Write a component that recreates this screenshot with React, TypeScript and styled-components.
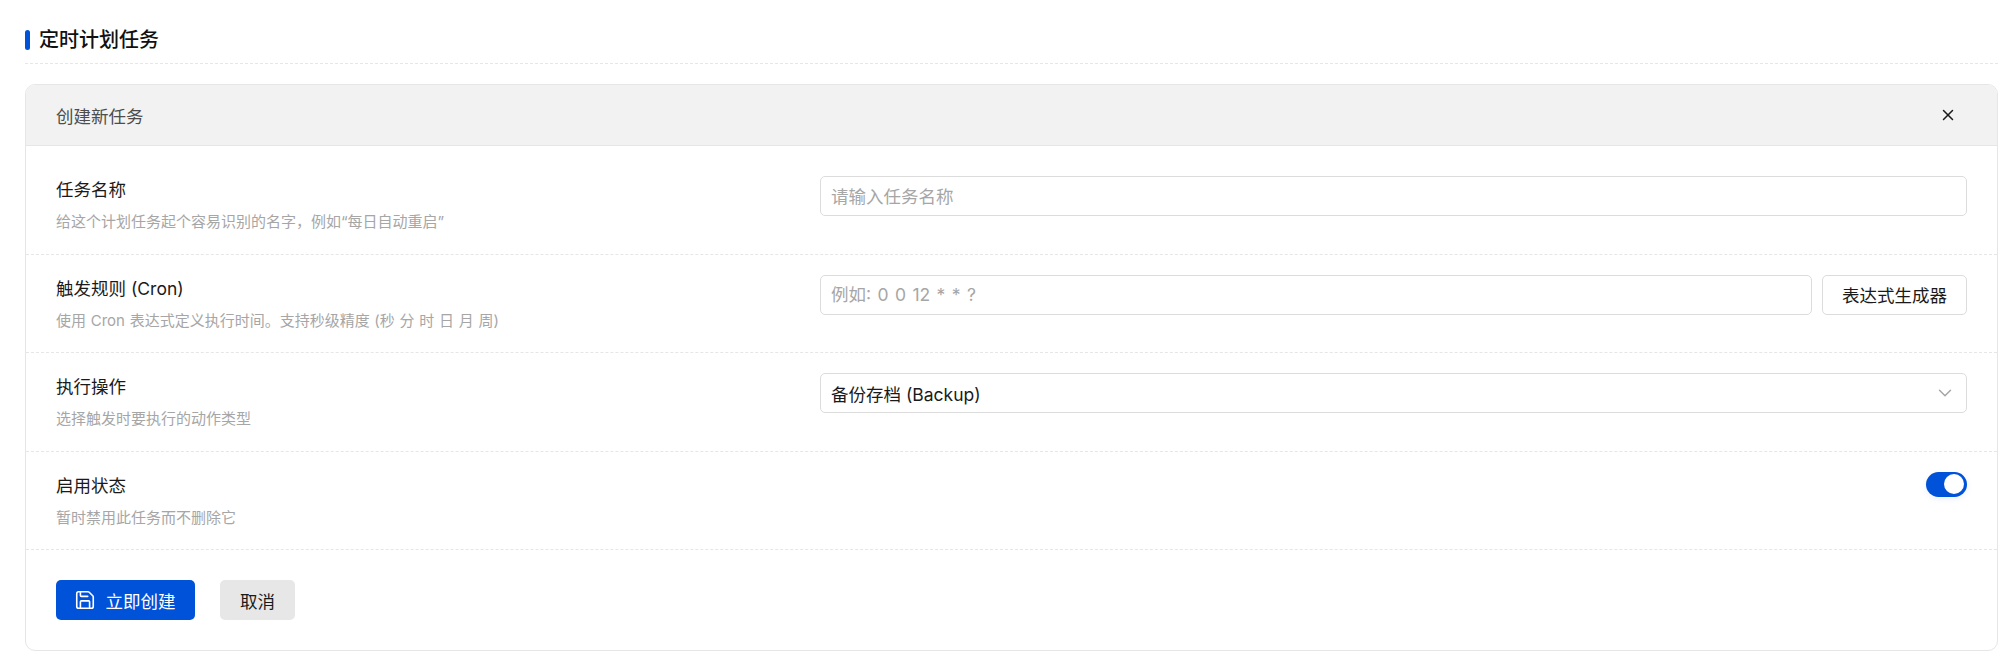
import React from "react";
import styled, { createGlobalStyle } from "styled-components";
import { Save, X, ChevronDown } from "lucide-react";

const FONT = `Inter, "Noto Sans CJK SC", sans-serif`;

const GlobalStyle = createGlobalStyle`
  html, body {
    margin: 0;
    padding: 0;
    background: #fff;
    font-family: ${FONT};
    overflow: hidden;
  }
  * {
    box-sizing: border-box;
  }
`;

const App: React.FC = () => {
  return (
    <>
      <GlobalStyle />
      <Page>
        <PageHeader>
          <PageTitle>定时计划任务</PageTitle>
        </PageHeader>

        <Panel>
          <PanelHeader>
            <PanelTitle>创建新任务</PanelTitle>
            <CloseButton>
              <X size={18} strokeWidth={2} />
            </CloseButton>
          </PanelHeader>

          <FormBody>
            <FormRow>
              <RowText>
                <RowLabel>任务名称</RowLabel>
                <RowHint>给这个计划任务起个容易识别的名字，例如“每日自动重启”</RowHint>
              </RowText>
              <RowControl>
                <TextInput placeholder="请输入任务名称" />
              </RowControl>
            </FormRow>

            <FormRow>
              <RowText>
                <RowLabel>触发规则 (Cron)</RowLabel>
                <RowHint>使用 Cron 表达式定义执行时间。支持秒级精度 (秒 分 时 日 月 周)</RowHint>
              </RowText>
              <RowControl>
                <TextInput placeholder="例如: 0 0 12 * * ?" />
                <OutlineButton>表达式生成器</OutlineButton>
              </RowControl>
            </FormRow>

            <FormRow>
              <RowText>
                <RowLabel>执行操作</RowLabel>
                <RowHint>选择触发时要执行的动作类型</RowHint>
              </RowText>
              <RowControl>
                <SelectBox>
                  <span>备份存档 (Backup)</span>
                  <ChevronDown size={22} strokeWidth={1.5} color="#a3a3a3" />
                </SelectBox>
              </RowControl>
            </FormRow>

            <FormRow>
              <RowText>
                <RowLabel>启用状态</RowLabel>
                <RowHint>暂时禁用此任务而不删除它</RowHint>
              </RowText>
              <ToggleCell>
                <Toggle>
                  <ToggleKnob />
                </Toggle>
              </ToggleCell>
            </FormRow>
          </FormBody>

          <Actions>
            <PrimaryButton>
              <Save size={22} strokeWidth={1.75} />
              立即创建
            </PrimaryButton>
            <GhostButton>取消</GhostButton>
          </Actions>
        </Panel>
      </Page>
    </>
  );
};

export default App;

const Page = styled.div`
  width: 2011px;
  height: 655px;
  padding: 30px 13px 0 25px;
`;

const PageHeader = styled.div`
  padding-bottom: 13px;
  border-bottom: 1px dashed #e6e6e6;
  margin-bottom: 20px;
`;

const PageTitle = styled.h1`
  display: flex;
  align-items: center;
  gap: 9px;
  margin: 0;
  height: 20px;
  font-size: 20px;
  line-height: 20px;
  font-weight: 500;
  color: #111;

  &::before {
    content: "";
    width: 5px;
    height: 20px;
    border-radius: 3px;
    background: #0052d9;
  }
`;

const Panel = styled.section`
  height: 567px;
  border: 1px solid #e6e6e6;
  border-radius: 10px;
  overflow: hidden;
`;

const PanelHeader = styled.header`
  display: flex;
  align-items: center;
  justify-content: space-between;
  height: 61px;
  padding: 0 40px 0 30px;
  background: #f2f2f2;
  border-bottom: 1px solid #e6e6e6;
`;

const PanelTitle = styled.h2`
  margin: 0;
  font-size: 17.5px;
  font-weight: 400;
  color: #4d4d4d;
`;

const CloseButton = styled.button`
  display: flex;
  padding: 0;
  border: 0;
  background: none;
  color: #1a1a1a;
`;

const FormBody = styled.div`
  padding-top: 10px;
`;

const FormRow = styled.div`
  display: grid;
  grid-template-columns: 764px 1fr;
  align-items: start;
  height: 98.5px;
  padding: 20px 30px 0;
  border-bottom: 1px dashed #e6e6e6;
`;

const RowText = styled.div`
  display: flex;
  flex-direction: column;
  gap: 6px;
`;

const RowLabel = styled.div`
  font-size: 17.5px;
  line-height: 28px;
  color: #1a1a1a;
`;

const RowHint = styled.div`
  font-size: 15px;
  line-height: 24px;
  word-spacing: 0.5px;
  color: #a6a6a6;
`;

const RowControl = styled.div`
  display: flex;
  gap: 10px;
`;

const TextInput = styled.input`
  flex: 1;
  height: 40px;
  padding: 0 10px;
  border: 1px solid #dcdcdc;
  border-radius: 5px;
  outline: none;
  font-family: ${FONT};
  font-size: 17.5px;
  word-spacing: 1.5px;

  &::placeholder {
    color: #a6a6a6;
  }
`;

const OutlineButton = styled.button`
  width: 145px;
  height: 40px;
  padding: 0;
  border: 1px solid #dcdcdc;
  border-radius: 5px;
  background: #fff;
  font-family: ${FONT};
  font-size: 17.5px;
  color: #1a1a1a;
`;

const SelectBox = styled.div`
  flex: 1;
  display: flex;
  align-items: center;
  justify-content: space-between;
  height: 40px;
  padding: 0 10px;
  border: 1px solid #dcdcdc;
  border-radius: 5px;
  font-size: 17.5px;
  color: #1a1a1a;
`;

const ToggleCell = styled.div`
  display: flex;
  justify-content: flex-end;
`;

const Toggle = styled.div`
  display: flex;
  align-items: center;
  justify-content: flex-end;
  width: 41px;
  height: 25px;
  padding: 0 3px;
  border-radius: 13px;
  background: #0052d9;
  box-shadow: 0 2px 6px rgba(0, 82, 217, 0.08);
`;

const ToggleKnob = styled.span`
  width: 20px;
  height: 20px;
  border-radius: 50%;
  background: #fff;
`;

const Actions = styled.div`
  display: flex;
  gap: 25px;
  padding: 30px;
`;

const PrimaryButton = styled.button`
  display: flex;
  align-items: center;
  justify-content: center;
  gap: 10px;
  width: 139px;
  height: 40px;
  padding: 0 2px 0 0;
  border: 0;
  border-radius: 5px;
  background: #0052d9;
  font-family: ${FONT};
  font-size: 17.5px;
  color: #fff;
`;

const GhostButton = styled.button`
  width: 75px;
  height: 40px;
  padding: 0;
  border: 0;
  border-radius: 5px;
  background: #e7e7e7;
  font-family: ${FONT};
  font-size: 17.5px;
  color: #1a1a1a;
`;
